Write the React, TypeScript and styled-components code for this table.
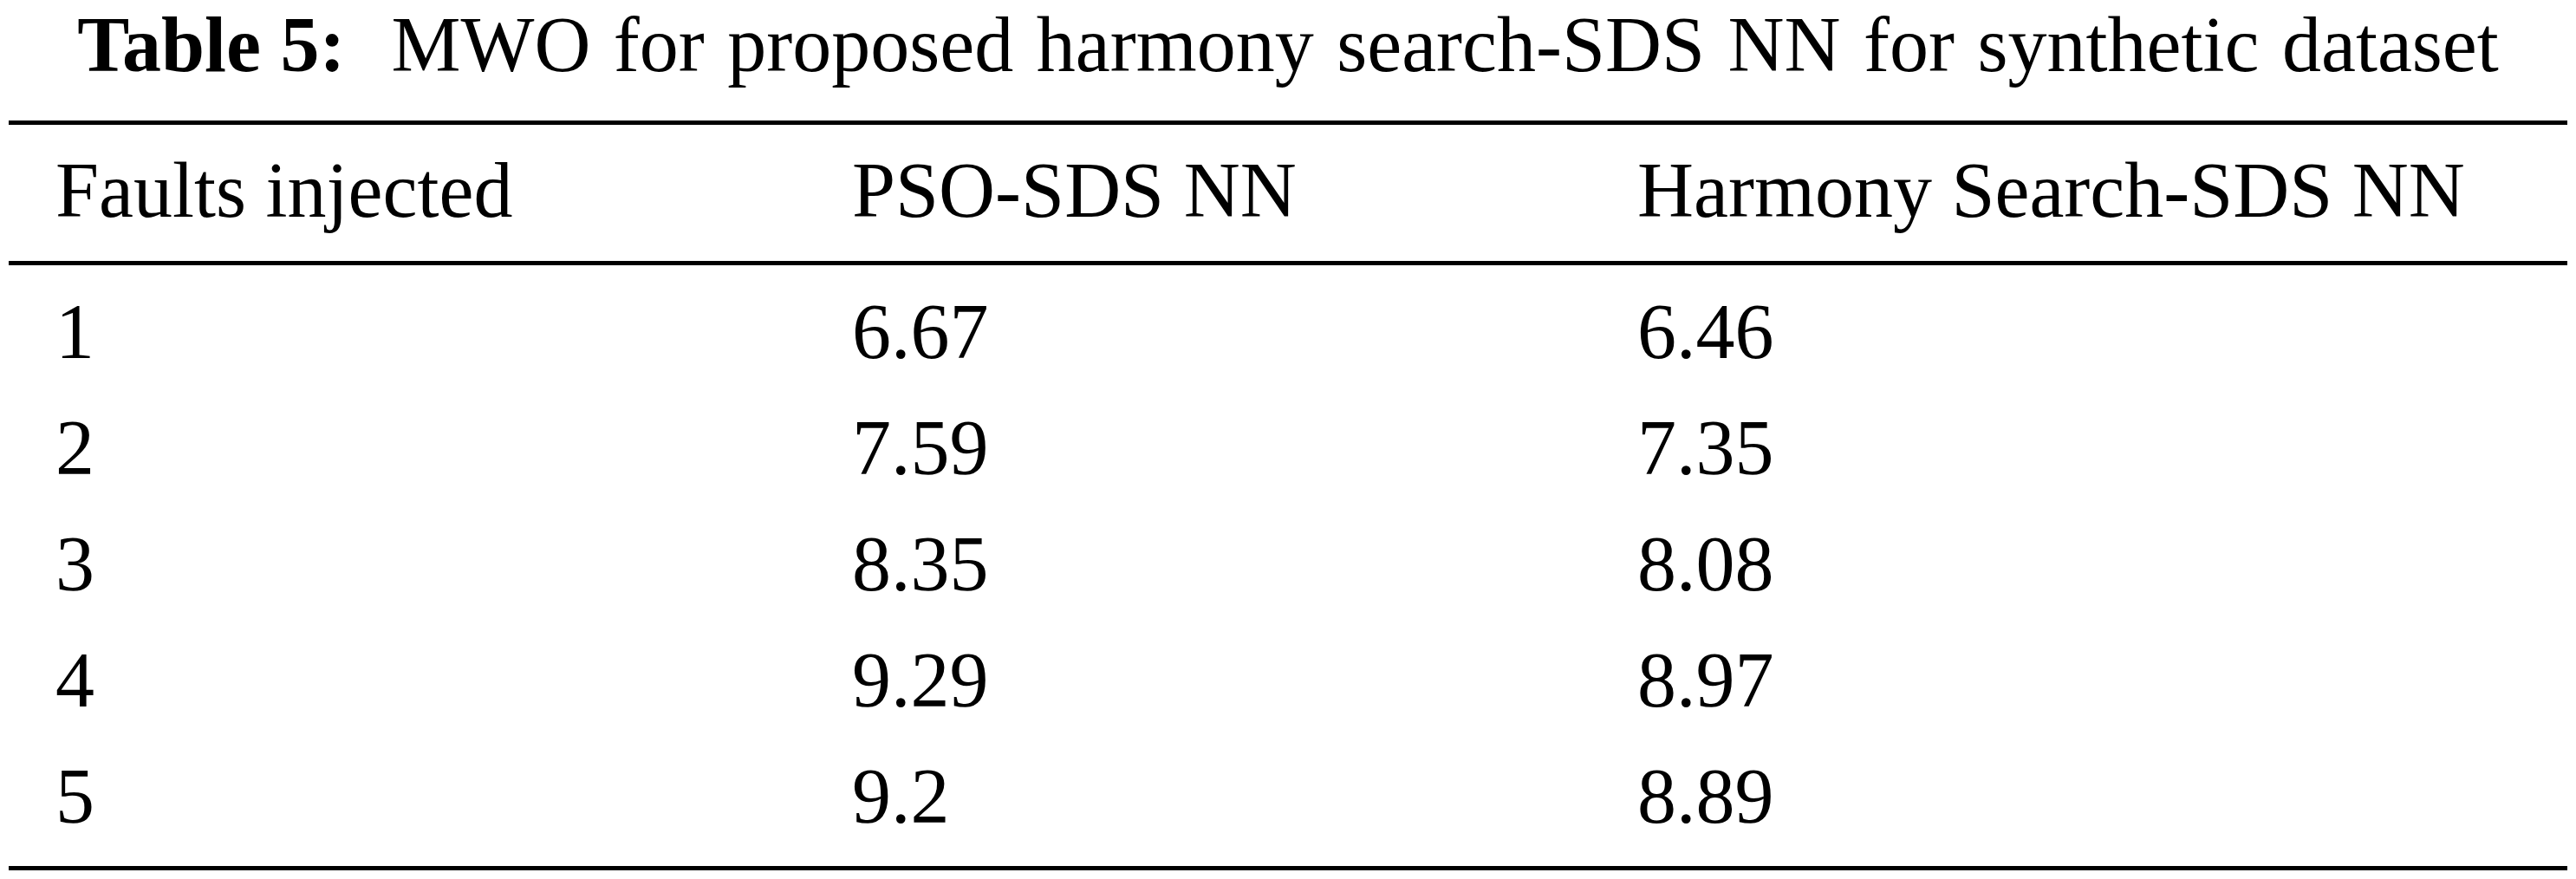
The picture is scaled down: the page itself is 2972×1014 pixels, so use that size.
import styled, { createGlobalStyle } from "styled-components";

const GlobalStyle = createGlobalStyle`
  html, body {
    margin: 0;
    padding: 0;
    background: #ffffff;
  }
  body {
    font-family: "Liberation Serif", "Times New Roman", serif;
    color: #000000;
  }
`;

type Row = {
  faults: string;
  pso: string;
  harmony: string;
};

const rows: Row[] = [
  { faults: "1", pso: "6.67", harmony: "6.46" },
  { faults: "2", pso: "7.59", harmony: "7.35" },
  { faults: "3", pso: "8.35", harmony: "8.08" },
  { faults: "4", pso: "9.29", harmony: "8.97" },
  { faults: "5", pso: "9.2", harmony: "8.89" },
];

const Page = styled.div`
  width: 2972px;
  height: 1014px;
  padding: 2px 10px 0;
  box-sizing: border-box;
  display: flex;
  flex-direction: column;
`;

const Caption = styled.div`
  font-size: 90px;
  line-height: 100px;
  text-align: center;
  white-space: pre;
  word-spacing: 4px;
  margin-bottom: 37px;
`;

const CaptionLabel = styled.span`
  font-weight: bold;
  word-spacing: 0;
`;

const Table = styled.div`
  display: flex;
  flex-direction: column;
  border-top: 5px solid #000;
  border-bottom: 5px solid #000;
`;

const HeadRow = styled.div`
  display: grid;
  grid-template-columns: 919px 906px 1fr;
  padding: 26px 0 31px;
  border-bottom: 5px solid #000;
`;

const Body = styled.div`
  display: flex;
  flex-direction: column;
  padding: 13px 0 10px;
`;

const BodyRow = styled.div`
  display: grid;
  grid-template-columns: 919px 906px 1fr;
  padding: 14px 0 20px;
`;

const Cell = styled.div`
  font-size: 90px;
  line-height: 100px;
  padding-left: 54px;
  white-space: nowrap;
`;

const App = () => {
  return (
    <>
      <GlobalStyle />
      <Page>
        <Caption>
          <CaptionLabel>Table 5:</CaptionLabel>
          {"  MWO for proposed harmony search-SDS NN for synthetic dataset"}
        </Caption>
        <Table>
          <HeadRow>
            <Cell>Faults injected</Cell>
            <Cell>PSO-SDS NN</Cell>
            <Cell>Harmony Search-SDS NN</Cell>
          </HeadRow>
          <Body>
            {rows.map((row) => (
              <BodyRow key={row.faults}>
                <Cell>{row.faults}</Cell>
                <Cell>{row.pso}</Cell>
                <Cell>{row.harmony}</Cell>
              </BodyRow>
            ))}
          </Body>
        </Table>
      </Page>
    </>
  );
};

export default App;
